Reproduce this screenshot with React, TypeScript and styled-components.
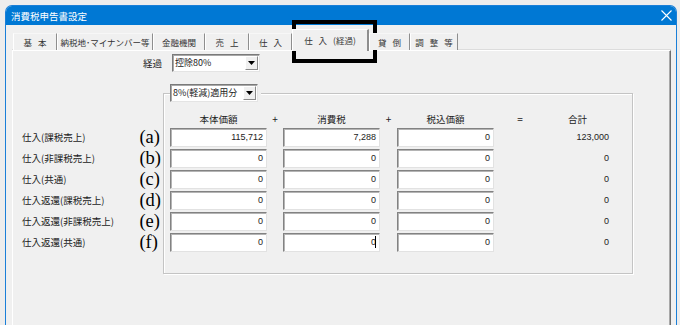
import React from "react";
import styled, { createGlobalStyle } from "styled-components";

const JP = `"Noto Sans CJK JP", "Noto Sans", sans-serif`;
const NUM = `"Liberation Sans", Arial, sans-serif`;

const GlobalStyle = createGlobalStyle`
  html, body { margin: 0; padding: 0; background: #ededed; }
  body { font-family: ${JP}; color: #1a1a1a; }
  * { box-sizing: border-box; }
`;

const Page = styled.div`
  position: relative;
  width: 680px;
  height: 325px;
  overflow: hidden;
  padding: 5px 0 0 5px;
  background: #ededed;
`;

const Window = styled.div`
  width: 672px;
  height: 330px;
  border: 1px solid #1a7fd8;
  border-bottom: none;
  border-radius: 7px 7px 0 0;
  background: #f0f0f0;
  overflow: hidden;
  display: flex;
  flex-direction: column;
`;

const TitleBar = styled.div`
  height: 19px;
  flex: none;
  background: #0078d4;
  color: #fff;
  font-size: 9.5px;
  display: flex;
  align-items: center;
  justify-content: space-between;
  padding: 0 4px 0 5px;
`;

const Body = styled.div`
  flex: 1;
  display: flex;
  flex-direction: column;
  padding: 4px 5px 0 6px;
`;

const TabStrip = styled.div`
  display: flex;
  align-items: flex-end;
  height: 21px;
  padding-left: 1px;
  position: relative;
  z-index: 1;
`;

const Tab = styled.div<{ $w: number; $active?: boolean }>`
  width: ${(p) => p.$w}px;
  height: ${(p) => (p.$active ? 22 : 17)}px;
  margin-bottom: ${(p) => (p.$active ? -1 : 0)}px;
  background: #f0f0f0;
  border-top: 1px solid ${(p) => (p.$active ? "#ffffff" : "#f7f7f7")};
  border-left: 1px solid #ffffff;
  border-right: ${(p) => (p.$active ? 2 : 1)}px solid #8e8e8e;
  font-size: 8.5px;
  color: #333;
  display: flex;
  align-items: ${(p) => (p.$active ? "flex-start" : "center")};
  padding-top: ${(p) => (p.$active ? 4 : 0)}px;
  justify-content: center;
  white-space: pre;
  word-spacing: 4px;
`;

const Panel = styled.div`
  flex: 1;
  border-top: 1px solid #ffffff;
  border-left: 1px solid #ffffff;
  border-right: 1px solid #6e6e6e;
  box-shadow: inset -1px 0 0 #a8a8a8, 0 -1px 0 #dcdcdc;
  background: #f0f0f0;
`;

const KeikaRow = styled.div`
  display: flex;
  align-items: center;
  height: 18px;
  margin-top: 3px;
  padding-left: 130px;
  gap: 10px;
  font-size: 9.5px;
`;

const SelectBox = styled.div`
  width: 88px;
  height: 18px;
  display: flex;
  background: #fff;
  border: 1px solid;
  border-color: #7a7a7a #e4e4e4 #e4e4e4 #7a7a7a;
  box-shadow: inset 1px 1px 0 #a8a8a8;
`;

const SelectText = styled.div`
  flex: 1;
  font-size: 9px;
  line-height: 16px;
  padding-left: 2px;
  white-space: nowrap;
`;

const SelectArrow = styled.div`
  width: 13px;
  margin: 1px 1px 1px 0;
  background: #f0f0f0;
  border: 1px solid;
  border-color: #ffffff #8a8a8a #8a8a8a #ffffff;
  display: flex;
  align-items: center;
  justify-content: center;
`;

const MainArea = styled.div`
  display: flex;
  margin-top: 21px;
`;

const LeftCol = styled.div`
  width: 150px;
  padding-top: 35px;
  padding-left: 9px;
  padding-right: 2px;
  display: grid;
  grid-template-columns: 1fr auto;
  grid-auto-rows: 21px;
`;

const RowLabel = styled.div`
  font-size: 9.5px;
  line-height: 19px;
  white-space: nowrap;
`;

const Letter = styled.div`
  font-family: "Liberation Serif", "DejaVu Serif", serif;
  font-size: 18.5px;
  line-height: 18px;
  color: #000;
`;

const GroupBox = styled.div`
  width: 470px;
  border: 1px solid #c4c4c4;
  box-shadow: inset 1px 1px 0 #fff, 1px 1px 0 #fff;
  padding: 0 23px 19px 6px;
`;

const LegendWrap = styled.div`
  width: fit-content;
  margin-top: -10px;
  padding-right: 3px;
  background: #f0f0f0;
`;

const DataGrid = styled.div`
  display: grid;
  grid-template-columns: 97px 16px 97px 17px 97px 52px 63px;
  grid-template-rows: 16px;
  grid-auto-rows: 21px;
  margin-top: 10px;
`;

const HeadCell = styled.div<{ $sym?: boolean }>`
  font-size: ${(p) => (p.$sym ? 10 : 9.5)}px;
  line-height: 14px;
  text-align: center;
  color: #222;
`;

const Field = styled.div`
  height: 19px;
  background: #fff;
  border: 1px solid;
  border-color: #828282 #e2e2e2 #e2e2e2 #828282;
  box-shadow: inset 1px 1px 0 #b4b4b4;
  font-family: ${NUM};
  font-size: 9px;
  line-height: 16px;
  text-align: right;
  padding-right: 3px;
  color: #222;
`;

const Caret = styled.span`
  display: inline-block;
  width: 1px;
  height: 12px;
  margin-left: -1px;
  vertical-align: -3px;
  background: #000;
`;

const Total = styled.div`
  font-family: ${NUM};
  font-size: 9px;
  line-height: 19px;
  text-align: right;
  color: #222;
`;

const Gap = styled.div``;

const Highlight = styled.div`
  position: absolute;
  left: 292px;
  top: 20px;
  width: 85px;
  height: 43px;
  border: 4px solid #000;
  pointer-events: none;
`;

const Arrow = () => (
  <svg width="7" height="4" viewBox="0 0 7 4">
    <path d="M0 0 H7 L3.5 4 Z" fill="#000" />
  </svg>
);

const CloseIcon = () => (
  <svg width="11" height="11" viewBox="0 0 11 11">
    <path d="M0.5 0.5 L10.5 10.5 M10.5 0.5 L0.5 10.5" stroke="#fff" strokeWidth="1.1" />
  </svg>
);

const Select = ({ value }: { value: string }) => (
  <SelectBox>
    <SelectText>{value}</SelectText>
    <SelectArrow>
      <Arrow />
    </SelectArrow>
  </SelectBox>
);

const tabs: { label: string; w: number; active?: boolean }[] = [
  { label: "基 本", w: 44 },
  { label: "納税地･マイナンバー等", w: 96 },
  { label: "金融機関", w: 52 },
  { label: "売 上", w: 44 },
  { label: "仕 入", w: 43 },
  { label: "仕 入 (経過)", w: 77, active: true },
  { label: "貸 倒", w: 41 },
  { label: "調 整 等", w: 48 },
];

type Row = {
  label: string;
  letter: string;
  base: string;
  tax: string;
  incl: string;
  total: string;
  caret?: boolean;
};

const rows: Row[] = [
  { label: "仕入(課税売上)", letter: "(a)", base: "115,712", tax: "7,288", incl: "0", total: "123,000" },
  { label: "仕入(非課税売上)", letter: "(b)", base: "0", tax: "0", incl: "0", total: "0" },
  { label: "仕入(共通)", letter: "(c)", base: "0", tax: "0", incl: "0", total: "0" },
  { label: "仕入返還(課税売上)", letter: "(d)", base: "0", tax: "0", incl: "0", total: "0" },
  { label: "仕入返還(非課税売上)", letter: "(e)", base: "0", tax: "0", incl: "0", total: "0" },
  { label: "仕入返還(共通)", letter: "(f)", base: "0", tax: "0", incl: "0", total: "0", caret: true },
];

export default function App() {
  return (
    <>
      <GlobalStyle />
      <Page>
        <Window>
          <TitleBar>
            <span>消費税申告書設定</span>
            <CloseIcon />
          </TitleBar>
          <Body>
            <TabStrip>
              {tabs.map((t) => (
                <Tab key={t.label} $w={t.w} $active={t.active}>
                  {t.label}
                </Tab>
              ))}
            </TabStrip>
            <Panel>
              <KeikaRow>
                <span>経過</span>
                <Select value="控除80%" />
              </KeikaRow>
              <MainArea>
                <LeftCol>
                  {rows.map((r) => (
                    <React.Fragment key={r.label}>
                      <RowLabel>{r.label}</RowLabel>
                      <Letter>{r.letter}</Letter>
                    </React.Fragment>
                  ))}
                </LeftCol>
                <GroupBox>
                  <LegendWrap>
                    <Select value="8%(軽減)適用分" />
                  </LegendWrap>
                  <DataGrid>
                    <HeadCell>本体価額</HeadCell>
                    <HeadCell $sym>+</HeadCell>
                    <HeadCell>消費税</HeadCell>
                    <HeadCell $sym>+</HeadCell>
                    <HeadCell>税込価額</HeadCell>
                    <HeadCell $sym>=</HeadCell>
                    <HeadCell>合計</HeadCell>
                    {rows.map((r) => (
                      <React.Fragment key={r.label}>
                        <Field>{r.base}</Field>
                        <Gap />
                        <Field>
                          {r.tax}
                          {r.caret && <Caret />}
                        </Field>
                        <Gap />
                        <Field>{r.incl}</Field>
                        <Gap />
                        <Total>{r.total}</Total>
                      </React.Fragment>
                    ))}
                  </DataGrid>
                </GroupBox>
              </MainArea>
            </Panel>
          </Body>
        </Window>
        <Highlight />
      </Page>
    </>
  );
}
